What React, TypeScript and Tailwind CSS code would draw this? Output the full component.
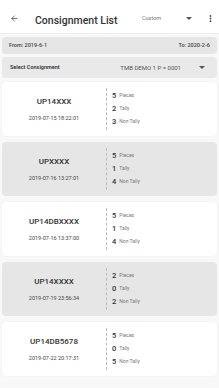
import { ArrowLeft, EllipsisVertical } from 'lucide-react';

type Consignment = {
  code: string;
  date: string;
  pieces: number;
  tally: number;
  nonTally: number;
};

const items: Consignment[] = [
  { code: 'UP14XXX', date: '2019-07-15 18:22:01', pieces: 5, tally: 2, nonTally: 3 },
  { code: 'UPXXXX', date: '2019-07-16 13:27:01', pieces: 5, tally: 1, nonTally: 4 },
  { code: 'UP14DBXXXX', date: '2019-07-16 13:37:00', pieces: 5, tally: 1, nonTally: 4 },
  { code: 'UP14XXXX', date: '2019-07-19 23:56:34', pieces: 2, tally: 0, nonTally: 2 },
  { code: 'UP14DB5678', date: '2019-07-22 20:17:31', pieces: 5, tally: 0, nonTally: 5 },
];

function Caret({ className = '' }: { className?: string }) {
  return (
    <svg viewBox="0 0 10 5" className={`h-[3px] w-[6px] shrink-0 ${className}`}>
      <path d="M0 0 L10 0 L5 5 Z" fill="#555" />
    </svg>
  );
}

function Stat({ n, label }: { n: number; label: string }) {
  return (
    <div className="flex h-[13px] items-center gap-[3px]">
      <span className="text-[7.5px] font-medium text-[#333]">{n}</span>
      <span className="text-[5px] text-[#777]">{label}</span>
    </div>
  );
}

function Card({ item, shaded }: { item: Consignment; shaded: boolean }) {
  return (
    <div
      className={`flex h-[54px] rounded-[4px] ${
        shaded ? 'bg-[#e6e6e6]' : 'bg-white shadow-[0_0_2px_rgba(0,0,0,0.06)]'
      }`}
    >
      <div className="flex w-[104px] flex-col items-center pt-[14px]">
        <span className="text-[8px] font-medium leading-[12px] text-[#333]">{item.code}</span>
        <span className="mt-[7px] text-[5.5px] leading-[7px] text-[#444]">{item.date}</span>
      </div>
      <div className="my-[6px] border-l border-dashed border-[#bbb]" />
      <div className="flex flex-col pl-[5px] pt-[7px]">
        <Stat n={item.pieces} label="Pieces" />
        <Stat n={item.tally} label="Tally" />
        <Stat n={item.nonTally} label="Non Tally" />
      </div>
    </div>
  );
}

export default function App() {
  return (
    <div className="h-[388px] w-[219px] overflow-hidden bg-[#f8f8f8] font-['Roboto',sans-serif]">
      <div className="flex h-[34px] items-center whitespace-nowrap border-b border-[#ececec] bg-white pt-[4px]">
        <ArrowLeft className="ml-[10px] h-[9px] w-[9px] shrink-0 text-[#444]" strokeWidth={2} />
        <div className="ml-[16px] w-[107px] shrink-0">
          <span className="text-[10.5px] font-medium text-[#333]">Consignment List</span>
        </div>
        <span className="text-[5.5px] text-[#777]">Custom</span>
        <Caret className="ml-[25px]" />
        <EllipsisVertical className="ml-[14px] h-[9px] w-[9px] shrink-0 text-[#444]" strokeWidth={3} />
      </div>

      <div className="mx-[2px] mt-[3px] flex h-[17px] items-center justify-between rounded-[4px] bg-[#e6e6e6] px-[7px] text-[5.5px] font-medium text-[#444]">
        <span>From: 2019-6-1</span>
        <span>To: 2020-2-6</span>
      </div>

      <div className="mx-[2px] mt-[3px] flex h-[21px] items-center rounded-[4px] bg-[#e9e9e9] pl-[8px] pr-[12px]">
        <span className="text-[5.5px] font-semibold text-[#333]">Select Consignment</span>
        <span className="ml-auto text-[6px] text-[#555]">TMB DEMO 1 P = 0001</span>
        <Caret className="ml-[18px]" />
      </div>

      <div className="mx-[2px] mt-[4px] flex flex-col gap-[6px]">
        {items.map((item, i) => (
          <Card key={item.code} item={item} shaded={i % 2 === 1} />
        ))}
      </div>
    </div>
  );
}
